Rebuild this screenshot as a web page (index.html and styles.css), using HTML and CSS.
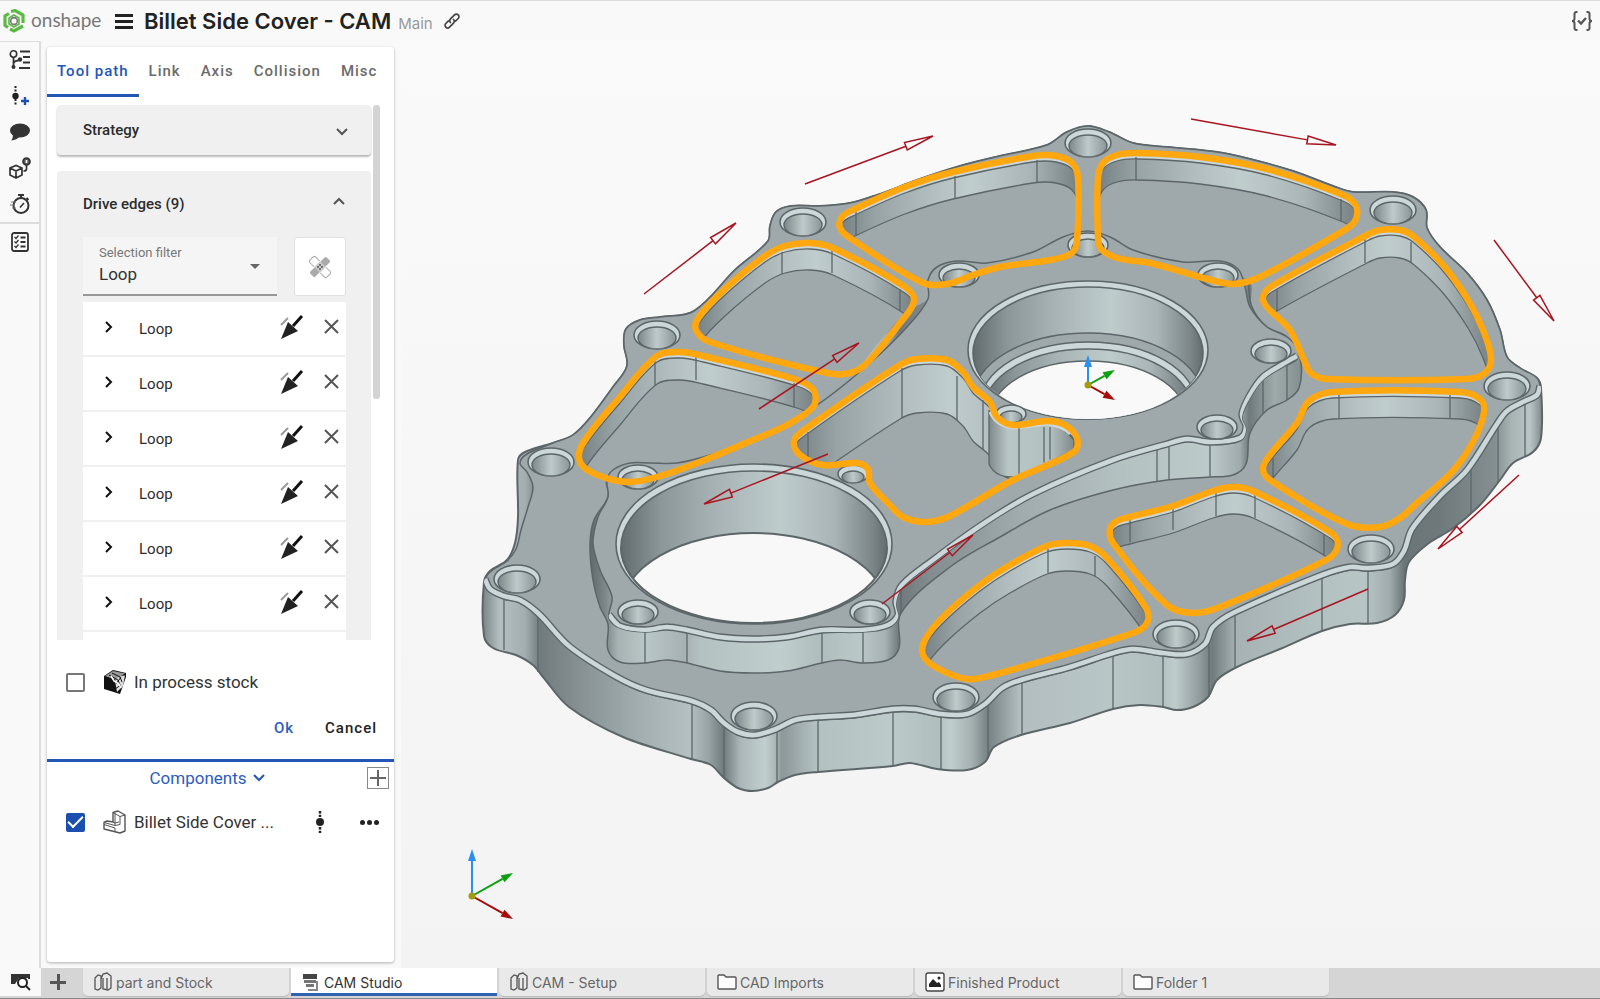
FILE: index.html
```html
<!DOCTYPE html>
<html lang="en">
<head>
  <meta charset="UTF-8">
  <meta name="viewport" content="width=device-width, initial-scale=1.0">
  <title>Billet Side Cover - CAM</title>
  <link rel="stylesheet" href="styles.css">
</head>
<body>

  <header class="topbar">
    <a class="logo" href="#">
      <svg width="22" height="24" viewBox="0 0 22 24" fill="none">
        <path d="M8 2.5L12 1.5L20 6V14" stroke="#5cb946" stroke-width="3.2"/>
        <path d="M20 17L11 22L7 20" stroke="#5cb946" stroke-width="3.2"/>
        <path d="M5 18.5L2 16.5V7L6 4.5" stroke="#5cb946" stroke-width="3.2"/>
        <path d="M11 6L16 9V15L11 18L6 15V9Z" stroke="#5cb946" stroke-width="1.6"/>
        <circle cx="11" cy="12" r="3.4" stroke="#777" stroke-width="1.6"/>
      </svg>
      <span>onshape</span>
    </a>
    <button class="menu" aria-label="Menu"><i></i><i></i><i></i></button>
    <h1>Billet Side Cover - CAM</h1>
    <span class="branch">Main</span>
    <button class="icon-btn" aria-label="Share link">
      <svg width="18" height="18" viewBox="0 0 18 18" fill="none" stroke="#444" stroke-width="1.7" stroke-linecap="round">
        <path d="M7.5 10.5a2.6 2.6 0 0 1 0-3.700l4-4a2.600 2.600 0 0 1 3.700 3.700l-2.700 2.700"/>
        <path d="M10.500 7.500a2.600 2.600 0 0 1 0 3.700l-4 4a2.600 2.600 0 0 1-3.700-3.700l2.700-2.700"/>
      </svg>
    </button>
    <button class="icon-btn last" aria-label="Feature script">
      <svg width="24" height="22" viewBox="0 0 24 22" fill="none" stroke="#555" stroke-width="2">
        <path d="M7.5 2H6.500Q4.500 2 4.500 4v4.500Q4.500 11 2 11q2.500 0 2.500 2.500V18q0 2 2 2h1"/>
        <path d="M16.500 2h1q2 0 2 2v4.500q0 2.500 2.500 2.500q-2.500 0-2.500 2.500V18q0 2-2 2h-1"/>
        <path d="M8 10.500l3 3L16 8" stroke-width="2.400"/>
      </svg>
    </button>
  </header>

  <main class="workspace">
    <nav class="rail">
      <button aria-label="Versions">
        <svg width="22" height="22" viewBox="0 0 22 22" fill="none" stroke="#333" stroke-width="2">
          <circle cx="4.5" cy="5" r="3.2" stroke-width="1.6"/>
          <path d="M4.5 8v9M4.5 15q0-3 5-3.5" stroke-width="1.8"/>
          <circle cx="4.5" cy="18" r="2" fill="#333" stroke="none"/>
          <circle cx="11" cy="10.5" r="2.2" fill="#333" stroke="none"/>
          <path d="M11 2.5h10M14 8h7M14 13.5h7M10 19h11"/>
        </svg>
      </button>
      <button aria-label="Add node">
        <svg width="22" height="22" viewBox="0 0 22 22">
          <circle cx="6.5" cy="11" r="3.2" fill="#222"/>
          <path d="M6.5 1v7M6.5 14v7" stroke="#222" stroke-width="2" stroke-dasharray="2 1.5"/>
          <path d="M16 12v8M12 16h8" stroke="#1f4fb0" stroke-width="2.4"/>
        </svg>
      </button>
      <button aria-label="Comments">
        <svg width="22" height="22" viewBox="0 0 22 22" fill="#333">
          <ellipse cx="11" cy="9.5" rx="10" ry="7"/>
          <path d="M4 13Q4 18 2 19.5Q8 19 11 15Z"/>
        </svg>
      </button>
      <button aria-label="Properties">
        <svg width="22" height="22" viewBox="0 0 22 22" fill="none" stroke="#333" stroke-width="1.7">
          <path d="M1 11l6-2.5 6 2.5v7l-6 3-6-3zM1 11l6 3 6-3M7 14v7"/>
          <circle cx="17.5" cy="4.5" r="3.5" fill="#555" stroke="#333"/>
          <path d="M17.5 8v4q0 2-3 2"/>
          <path d="M17.5 3v3" stroke="#fff"/>
        </svg>
      </button>
      <button aria-label="Timing">
        <svg width="22" height="22" viewBox="0 0 22 22" fill="none" stroke="#333" stroke-width="2">
          <circle cx="12" cy="12.5" r="7.500"/>
          <path d="M9 2h6M12 2v3M17.500 5l2 2"/>
          <path d="M11 14.500l4-4.500" stroke-width="1.600"/>
          <path d="M2 9h5M1 12h5M3 15h4" stroke-width="1.200" stroke="#777"/>
        </svg>
      </button>
      <button class="below-rule" aria-label="Checklist">
        <svg width="22" height="22" viewBox="0 0 22 22" fill="none" stroke="#333" stroke-width="1.8">
          <rect x="3" y="2" width="16" height="18" rx="2"/>
          <path d="M11.5 6.5h5M11.5 11h5M11.5 15.5h5"/>
          <path d="M5.500 6l1.500 1.500 2.500-3M5.500 10.500l1.500 1.500 2.500-3M5.500 15l1.500 1.500 2.500-3" stroke-width="1.300"/>
        </svg>
      </button>
    </nav>

    <section class="panel">
      <nav class="tabs">
        <a class="active" href="#">Tool path</a>
        <a href="#">Link</a>
        <a href="#">Axis</a>
        <a href="#">Collision</a>
        <a href="#">Misc</a>
      </nav>

      <div class="scroll">
        <button class="card strategy">
          Strategy
          <svg width="14" height="14" viewBox="0 0 14 14"><path d="M2 6l5 5 5-5"/></svg>
        </button>

        <div class="card edges">
          <button class="edges-head">
            Drive edges (9)
            <svg width="14" height="16" viewBox="0 0 14 16"><path d="M2 8l5-5 5 5"/></svg>
          </button>
          <div class="filter">
            <div class="field">
              <label for="filter">Selection filter</label>
              <select id="filter">
                <option>Loop</option>
                <option>Edge</option>
              </select>
            </div>
            <button class="patch" aria-label="Repair selection">
              <svg width="24" height="24" viewBox="0 0 24 24">
                <rect x="0" y="8" width="24" height="8" rx="2" fill="#fff" stroke="#aaa" transform="rotate(45 12 12)"/>
                <g transform="rotate(-45 12 12)">
                  <rect x="0" y="8" width="24" height="8" rx="2" fill="#aaa" stroke="#fff"/>
                  <rect x="8" y="8" width="8" height="8" fill="#ccc"/>
                </g>
                <path d="M10 12h0M12 10h0M14 12h0M12 14h0" stroke="#fff" stroke-width="1.5" stroke-linecap="round"/>
              </svg>
            </button>
          </div>
          <ul class="loops" id="loops"></ul>
        </div>
        <div class="thumb"></div>
      </div>

      <label class="stock">
        <input type="checkbox">
        <svg width="24" height="26" viewBox="0 0 24 26">
          <path d="M1 7L10 1L23 4V8L17 25L1 20Z" fill="#111"/>
          <path d="M2 7L10 2L22 4.500L12 11Z" fill="#999"/>
          <path d="M12 12Q14 7 22 6.500L20 17L14 23Z" fill="#ddd"/>
          <path d="M3 8l9 3M6 6l9 5l2 5M9 4l8 4l2 5M13 15l5-7M12 20l6-4" stroke="#111" fill="none"/>
          <path d="M8 7l3 5 5 3 2 4" stroke="#fff" fill="none" stroke-width="1.5"/>
        </svg>
        <span>In process stock</span>
      </label>
      <div class="actions">
        <button class="ok">Ok</button>
        <button>Cancel</button>
      </div>

      <div class="components">
        <div class="components-head">
          <button class="toggle">
            Components
            <svg width="14" height="10" viewBox="0 0 14 10"><path d="M2 2l5 5 5-5"/></svg>
          </button>
          <button class="add" aria-label="Add component"></button>
        </div>
        <div class="component">
          <label>
            <input type="checkbox" checked>
            <svg width="24" height="24" viewBox="0 0 24 24" fill="#fff" stroke="#555" stroke-width="1.4" stroke-linejoin="round">
              <path d="M10 2.500L15 1L22 5V21L17 23L1 19V12.500L4 11L10 12Z"/>
              <path d="M10 2.500L17 6.500L22 5M12 3.500V13M1 12.500L12 15.500L17 14.500V6.500M12 13V15.500M1 14.500L12 18V21M10 12L12 13L16 12" fill="none" stroke-width="1"/>
            </svg>
            <span>Billet Side Cover ...</span>
          </label>
          <button aria-label="Position">
            <svg width="12" height="24" viewBox="0 0 12 24">
              <circle cx="6" cy="12" r="4" fill="#222"/>
              <path d="M6 1v6M6 17v6" stroke="#222" stroke-width="2.5" stroke-dasharray="2.4 1.4"/>
            </svg>
          </button>
          <button class="more" aria-label="More"><i></i><i></i><i></i></button>
        </div>
      </div>
    </section>

    <section class="viewport">
      <svg id="model" viewBox="401 41 1199 927" role="img" aria-label="Billet side cover"></svg>
    </section>
  </main>

  <footer class="docs">
    <button class="find" aria-label="Search tabs">
      <svg width="22" height="20" viewBox="0 0 22 20" fill="none" stroke="#222" stroke-width="2">
        <path d="M2 12V3h17v4"/>
        <path d="M1 2h19v4H9l-4 6H1z" fill="#333" stroke="none"/>
        <circle cx="12.5" cy="10.5" r="4.5" fill="#fff"/>
        <path d="M16 14l4 4"/>
      </svg>
    </button>
    <button class="new" aria-label="New tab"></button>
    <a href="#">
      <svg width="20" height="20" viewBox="0 0 20 20" fill="none" stroke="#555" stroke-width="1.3"><path d="M2 6l3-3 3 1v12l-3 2-3-1zM8 7l2-5 4-1 4 3v12l-3 2-5-1V6"/><path d="M14 6v12"/></svg>
      part and Stock
    </a>
    <a class="current" href="#">
      <svg width="20" height="20" viewBox="0 0 20 20"><path d="M2 2h14v5H2z" fill="#444"/><path d="M3 8h12v3H3zM5 12h8v3H5z" fill="#777"/><path d="M7 18h9V9" stroke="#888" fill="none" stroke-width="2"/></svg>
      CAM Studio
    </a>
    <a href="#">
      <svg width="20" height="20" viewBox="0 0 20 20" fill="none" stroke="#555" stroke-width="1.3"><path d="M2 6l3-3 3 1v12l-3 2-3-1zM8 7l2-5 4-1 4 3v12l-3 2-5-1V6"/><path d="M14 6v12"/></svg>
      CAM - Setup
    </a>
    <a href="#">
      <svg width="20" height="20" viewBox="0 0 20 20" fill="#fff" stroke="#555" stroke-width="1.4"><path d="M1 16V4q0-1 1-1h5l2 2h9q1 0 1 1v10q0 1-1 1H2q-1 0-1-1z"/></svg>
      CAD Imports
    </a>
    <a href="#">
      <svg width="20" height="20" viewBox="0 0 20 20"><rect x="1" y="1" width="18" height="18" rx="2" fill="#fff" stroke="#444" stroke-width="1.4"/><path d="M4 15V12l4-5 4 4 2-1 2 3v2z" fill="#222"/><circle cx="14" cy="6" r="1.5" fill="#222"/></svg>
      Finished Product
    </a>
    <a href="#">
      <svg width="20" height="20" viewBox="0 0 20 20" fill="#fff" stroke="#555" stroke-width="1.4"><path d="M1 16V4q0-1 1-1h5l2 2h9q1 0 1 1v10q0 1-1 1H2q-1 0-1-1z"/></svg>
      Folder 1
    </a>
  </footer>

  <script src="model.js"></script>
</body>
</html>
```
FILE: styles.css
```css
* {
  box-sizing: border-box;
}

body {
  margin: 0;
  height: 100vh;
  display: flex;
  flex-direction: column;
  overflow: hidden;
  background: #f9f9f9;
  color: #333;
  font-family: Roboto, sans-serif;
}

button {
  background: none;
  border: none;
  padding: 0;
  font: inherit;
  color: inherit;
  letter-spacing: inherit;
  cursor: pointer;
}

a {
  color: inherit;
  text-decoration: none;
}

svg {
  display: block;
  flex: none;
}

/* top bar */
.topbar {
  flex: none;
  height: 41px;
  display: flex;
  align-items: center;
  padding: 0 6px 0 3px;
  border-top: 1px solid #ddd;
}

.logo {
  display: flex;
  align-items: center;
  gap: 6px;
  width: 112px;
  color: #777;
  font-family: Lato, sans-serif;
  font-size: 19px;
}

.logo span {
  margin-top: -3px;
}

.menu {
  width: 18px;
  margin-right: 11px;
}

.menu i {
  display: block;
  height: 3px;
  margin: 3px 0;
  background: #222;
}

h1 {
  margin: 0 7px 0 0;
  color: #222;
  font-family: Inter, sans-serif;
  font-size: 22px;
  font-weight: 600;
}

.branch {
  margin: 4px 10px 0 0;
  color: #999;
  font-family: Inter, sans-serif;
  font-size: 15px;
}

.icon-btn.last {
  margin-left: auto;
}

/* left side */
.workspace {
  flex: 1;
  min-height: 0;
  display: flex;
}

.rail {
  flex: none;
  width: 41px;
  border-top: 1px solid #ddd;
  border-right: 2px solid #ddd;
}

.rail button {
  display: flex;
  align-items: center;
  justify-content: center;
  width: 100%;
  height: 36px;
}

.rail button.below-rule {
  height: 38px;
  border-top: 2px solid #ddd;
}

.panel {
  flex: none;
  width: 347px;
  margin: 6px 7px 6px 6px;
  display: flex;
  flex-direction: column;
  background: #fff;
  border-radius: 3px;
  box-shadow: 0 1px 3px rgba(0,0,0,0.3);
}

.tabs {
  display: flex;
  height: 50px;
  color: #6b6b6b;
  font-size: 15px;
  font-weight: 500;
  line-height: 48px;
  letter-spacing: 1px;
}

.tabs a {
  padding: 0 10px;
}

.tabs .active {
  color: #2456b8;
  border-bottom: 3px solid #2456b8;
}

.scroll {
  position: relative;
  flex: 1;
  min-height: 0;
  overflow: hidden;
  margin-top: 8px;
  padding: 0 23px 0 10px;
}

.thumb {
  position: absolute;
  top: 0;
  right: 14px;
  width: 7px;
  height: 294px;
  border-radius: 3px;
  background: #d4d4d4;
}

.card {
  background: #f0f0f0;
  border-radius: 4px;
  color: #2c2c2c;
  font-size: 15px;
  font-weight: 500;
}

.card svg path {
  fill: none;
  stroke: #555;
  stroke-width: 2;
}

.strategy,
.edges-head {
  display: flex;
  align-items: center;
  justify-content: space-between;
  width: 100%;
}

.strategy {
  height: 50px;
  padding: 0 22px 0 26px;
  box-shadow: 0 2px 2px #bbb;
}

.edges {
  margin-top: 16px;
  padding: 0 25px 0 26px;
}

.edges-head {
  height: 66px;
}

.filter {
  display: flex;
  justify-content: space-between;
  height: 59px;
}

.field {
  position: relative;
  width: 194px;
  padding: 8px 16px 0;
  background: #f5f5f5;
  border-bottom: 2px solid #999;
  font-weight: 400;
}

.field label {
  display: block;
  color: #777;
  font-size: 13px;
  line-height: 16px;
}

.field select {
  width: 100%;
  padding: 0;
  appearance: none;
  background: none;
  border: none;
  color: #333;
  font-family: Roboto, sans-serif;
  font-size: 17px;
  line-height: 26px;
}

.field::after {
  content: "";
  position: absolute;
  right: 17px;
  top: 27px;
  border: 5px solid transparent;
  border-top-color: #666;
  border-bottom: none;
}

.patch {
  display: flex;
  align-items: center;
  justify-content: center;
  width: 52px;
  background: #fff;
  border: 1px solid #e2e2e2;
  border-radius: 3px;
}

.loops {
  list-style: none;
  margin: 6px 0 0;
  padding: 0 0 20px;
  background: #fff;
}

.loops li {
  display: flex;
  align-items: center;
  height: 55px;
  padding: 0 7px 4px 20px;
  border-bottom: 2px solid #f0f0f0;
  font-size: 15px;
  font-weight: 400;
}

.loops span {
  flex: 1;
  margin: 4px 0 0 24px;
}

.loops button + button {
  margin-left: 20px;
}

.loops svg .chevron {
  stroke: #111;
}

.loops svg .head {
  fill: #222;
  stroke: none;
}

.loops svg .shaft {
  stroke: #111;
  stroke-width: 3;
}

.loops svg .ghost {
  stroke: #999;
}

/* panel footer */
.stock,
.component label {
  display: flex;
  align-items: center;
  color: #333;
  font-size: 17px;
}

.stock {
  margin-top: 21px;
  height: 42px;
  padding-left: 19px;
}

.stock svg,
.component label svg {
  margin: 0 7px 0 18px;
}

input[type="checkbox"] {
  appearance: none;
  width: 19px;
  height: 19px;
  margin: 0;
  border: 2px solid #777;
  border-radius: 2px;
}

input[type="checkbox"]:checked {
  display: grid;
  place-items: center;
  background: #1b4fae;
  border-color: #1b4fae;
}

input[type="checkbox"]:checked::after {
  content: "";
  width: 13px;
  height: 6px;
  margin-top: -4px;
  border: solid #fff;
  border-width: 0 0 2px 2px;
  transform: rotate(-45deg);
}

.actions {
  display: flex;
  justify-content: flex-end;
  align-items: center;
  gap: 31px;
  height: 50px;
  margin-bottom: 6px;
  padding-right: 17px;
  color: #222;
  font-size: 15px;
  font-weight: 500;
  letter-spacing: 1px;
}

.actions .ok {
  color: #2b5cc0;
}

.components {
  height: 203px;
  border-top: 3px solid #2456b8;
}

.components-head {
  position: relative;
  display: flex;
  justify-content: center;
  align-items: center;
  height: 32px;
  padding-right: 26px;
}

.toggle {
  display: flex;
  align-items: center;
  gap: 5px;
  color: #2b5cc0;
  font-size: 17px;
}

.toggle path {
  fill: none;
  stroke: #2456b8;
  stroke-width: 2;
}

.add {
  position: absolute;
  right: 5px;
  width: 22px;
  height: 22px;
  border: 1px solid #888;
  background:
    linear-gradient(#666, #666) center / 16px 2px no-repeat,
    linear-gradient(#666, #666) center / 2px 16px no-repeat;
}

.component {
  display: flex;
  align-items: center;
  height: 56px;
  padding: 0 15px 0 19px;
}

.component label {
  flex: 1;
}

.more {
  display: flex;
  gap: 2px;
  margin-left: 34px;
}

.more i {
  width: 5px;
  height: 5px;
  border-radius: 50%;
  background: #222;
}

.viewport {
  flex: 1;
  min-width: 0;
  background: linear-gradient(#fafafa, #f3f3f3);
}

.viewport > svg {
  width: 100%;
  height: 100%;
}

/* document tabs */
.docs {
  flex: none;
  display: flex;
  height: 31px;
  padding-bottom: 2px;
  background: #d5d5d5;
  border-bottom: 1px solid #888;
  color: #666;
  font-family: Inter, sans-serif;
  font-size: 14px;
}

.find {
  width: 41px;
  display: flex;
  align-items: center;
  justify-content: center;
  background: #f9f9f9;
}

.new {
  width: 34px;
  margin-right: 8px;
  background:
    linear-gradient(#555, #555) center / 16px 3px no-repeat,
    linear-gradient(#555, #555) center / 3px 16px no-repeat;
}

.docs a {
  display: flex;
  align-items: center;
  gap: 3px;
  width: 206px;
  margin-right: 2px;
  padding-left: 10px;
  background: #e9e9e9;
  border-radius: 0 0 5px 5px;
  box-shadow: 0 1px 1px #bbb;
}

.docs .current {
  background: #fff;
  color: #333;
  border-radius: 0;
  box-shadow: inset 0 -3px #2f62b0;
}
```
FILE: model.js
```js
// list of selected loops
const row = `
  <li>
    <button aria-label="Expand"><svg width="12" height="14" viewBox="0 0 12 14"><path class="chevron" d="M3 2l5 5-5 5"/></svg></button>
    <span>Loop</span>
    <button aria-label="Flip direction"><svg width="24" height="24" viewBox="0 0 24 24">
      <path class="ghost" d="M1 10l7-7"/>
      <path class="shaft" d="M22 1L13 11"/>
      <path class="head" d="M1 24L8 7L18 16Z"/>
    </svg></button>
    <button aria-label="Remove"><svg width="15" height="15" viewBox="0 0 15 15"><path d="M1 1l13 13M14 1L1 14"/></svg></button>
  </li>`;
document.getElementById('loops').innerHTML = row.repeat(6);

// smooth curve through a list of points
function curve(p, closed) {
  const n = p.length;
  const at = i => closed ? p[(i + n) % n] : p[Math.max(0, Math.min(n - 1, i))];
  let d = 'M' + p[0];
  for (let i = 0; i < (closed ? n : n - 1); i++) {
    const a = at(i - 1), b = at(i), c = at(i + 1), e = at(i + 2);
    const t1 = Math.hypot(c[0] - a[0], c[1] - a[1]) || 1;
    const t2 = Math.hypot(e[0] - b[0], e[1] - b[1]) || 1;
    const k = Math.hypot(c[0] - b[0], c[1] - b[1]) / 3;
    d += ` C${(b[0] + (c[0] - a[0]) / t1 * k).toFixed(1)} ${(b[1] + (c[1] - a[1]) / t1 * k).toFixed(1)}`
       + ` ${(c[0] - (e[0] - b[0]) / t2 * k).toFixed(1)} ${(c[1] - (e[1] - b[1]) / t2 * k).toFixed(1)}`
       + ` ${c[0]} ${c[1]}`;
  }
  return d + (closed ? 'Z' : '');
}

function pts(s) {
  return s.trim().split(/\s+/).map(q => q.split(',').map(Number));
}

const EDGE = '#5c6669';
const FACE = '#9fa8aa';
const LIP = '#cbd7d8';

// rear part of the outline, shared by the silhouette and the top face
const rear = `573,435 590,418 613,387 627,366 624,345 626,329 640,320 660,317 694,311 735,270 768,241
  770,226 776,212 791,206 820,206 850,203 877,195 917,180 960,166 1000,156 1047,145 1067,132 1088,126
  1109,132 1133,143 1167,147 1217,152 1250,159 1293,171 1333,186 1353,192 1393,192 1413,197 1426,210
  1427,228 1440,247 1467,273 1487,300 1500,330 1507,357 1520,368 1537,378`;

const body = `484,582 490,571 507,560 515,543 518,517 518,460 525,452 553,443 ${rear}
  1541,388 1541,438 1533,452 1513,463 1500,480 1480,505 1452,529 1429,543 1409,562 1405,580 1404,600
  1395,615 1377,623 1350,624 1322,631 1280,649 1237,667 1217,680 1208,697 1193,707 1177,710 1163,707
  1140,705 1113,709 1070,723 1021,735 994,747 985,762 967,770 937,769 910,763 893,766 818,772 795,775
  778,782 768,788 753,791 738,788 723,777 711,765 691,759 623,737 569,707 543,677 533,665 516,655
  493,648 484,636`;

const front = `485,582 490,592 504,599 520,603 539,617 569,649 615,679 646,693 692,704 711,713 724,726
  738,735 755,738 776,732 795,723 818,720 853,718 893,712 914,712 941,717 967,717 985,707 1002,691
  1021,683 1070,670 1113,656 1133,652 1163,656 1187,657 1205,647 1213,630 1235,615 1322,578 1350,570
  1368,571 1393,567 1404,554 1412,532 1440,499 1467,473 1497,427 1507,414 1525,404 1537,398 1540,389`;

const topFace = front + ' ' + pts(rear).reverse().join(' ') +
  ' 553,443 527,454 520,463 527,472 533,487 528,507 521,530 516,549 507,561 490,572';

const plateauTop = `607,480 613,470 630,463 650,463 677,463 710,455 753,440 817,405 870,363 907,327 928,299
  928,280 937,267 957,261 987,263 1033,252 1063,237 1088,231 1110,237 1133,250 1183,262 1220,261
  1238,269 1245,287 1250,307 1267,327 1287,337 1297,348 1297,359 1283,367 1263,380 1250,398 1242,417
  1246,430 1240,441 1210,445 1187,442 1167,447 1113,463 1033,497 983,527 933,563 902,588 896,604
  898,618 888,628 863,632 822,633 787,640 753,642 720,640 687,633 667,630 645,632 620,628 609,618
  612,597 600,570 593,543 598,517 608,497`;

const plateauWall = `607,480 608,497 594,520 590,545 593,580 600,607 608,624 608,650 620,662 645,663 667,660
  687,663 720,671 753,673 787,671 822,663 840,660 863,663 888,660 899,648 901,613 950,567 1000,537
  1050,510 1113,490 1167,480 1210,477 1233,475 1246,464 1250,433 1267,410 1287,400 1299,388 1300,358
  1287,337 1267,327 1252,307 1248,280 1183,262 1088,300 928,300 800,430`;

const plateauFront = `609,618 620,629 645,633 667,630 687,633 720,640 753,642 787,640 822,633 863,633 888,628
  898,618 896,604 902,588 933,563 983,527 1033,497 1113,463 1167,447 1187,442 1210,445 1240,441
  1246,430 1242,417 1250,398 1263,380 1283,367 1297,359`;

// pockets: outline, depth, corner lines (x, y)
const pockets = [
  { p: '855,209 905,187 953,172 1033,156 1056,156 1072,163 1078,178 1077,240 1072,253 1050,260 1000,267 973,275 947,284 923,283 850,238 840,228 842,217', d: 23,
    l: [[856, 212], [955, 176], [1037, 160]] },
  { p: '1137,153 1200,157 1267,169 1343,195 1356,206 1355,221 1343,231 1260,277 1233,284 1207,279 1193,275 1150,263 1117,258 1101,249 1098,238 1098,178 1103,163 1117,155', d: 23,
    l: [[1136, 157], [1341, 199]] },
  { p: '1367,235 1380,230 1400,230 1413,236 1443,265 1468,300 1483,330 1491,358 1485,373 1467,379 1327,379 1311,373 1304,360 1290,330 1267,307 1263,297 1272,286', d: 24,
    l: [[1277, 290], [1365, 239], [1411, 242]] },
  { p: '1333,392 1460,392 1480,399 1484,412 1474,440 1452,472 1417,503 1400,518 1380,527 1347,524 1270,480 1263,469 1270,455 1297,423 1309,401', d: 23,
    l: [[1273, 458], [1339, 395], [1450, 395]] },
  { p: '1130,517 1173,506 1213,491 1233,487 1253,491 1330,532 1338,545 1328,559 1220,607 1193,613 1167,605 1113,543 1110,529 1117,521', d: 23,
    l: [[1130, 519], [1173, 507], [1216, 493], [1255, 495], [1324, 534]] },
  { p: '1047,546 1067,543 1090,546 1107,558 1146,608 1147,623 1133,633 993,675 967,679 937,668 923,655 925,640 943,617 980,585 1010,565', d: 24,
    l: [[1048, 549], [1095, 556]] },
  { p: '657,356 680,352 703,356 797,380 814,391 813,407 785,426 753,440 700,462 657,477 630,482 603,477 581,464 582,445 620,397', d: 24,
    l: [[655, 361], [696, 356], [794, 383]] },
  { p: '765,256 785,246 810,243 833,248 905,287 914,301 900,323 867,363 850,373 827,373 710,342 696,330 699,317 725,289', d: 23,
    l: [[782, 252], [832, 250], [900, 289]] }
];

const centre = { p: '900,365 917,359 947,360 963,372 973,387 990,402 997,417 1013,425 1047,421 1065,425 1077,438 1074,452 1013,480 950,516 927,522 903,517 888,503 870,483 868,469 857,463 823,465 800,455 794,441 807,428', d: 50,
  l: [[902, 368], [957, 376], [983, 400], [808, 432]] };

const bigHoles = pts('1088,143 803,222 657,335 551,462 517,579 754,716 956,697 1176,634 1371,549 1507,386 1393,210');
const midHoles = pts('638,477 638,612 870,612 959,275 1088,245 1218,275 1271,351 1217,427');
const pinHoles = pts('853,474 1011,414');

const arrows = [
  [805, 184, 933, 136], [1191, 119, 1336, 145], [1494, 240, 1554, 321], [1519, 475, 1438, 549],
  [1368, 589, 1247, 641], [882, 604, 973, 535], [828, 454, 704, 504], [759, 409, 859, 343], [644, 294, 736, 223]
];

function line(x1, y1, x2, y2) {
  return `<path d="M${x1} ${y1}L${x2} ${y2}" stroke="${EDGE}" stroke-width="1.3"/>`;
}

function pocket(o, i) {
  const d = curve(pts(o.p), true);
  return `<clipPath id="clip${i}"><path d="${d}"/></clipPath>
    <g clip-path="url(#clip${i})">
      <path d="${d}" fill="${LIP}"/>
      <path d="${d}" transform="translate(0 6)" fill="url(#pocketWall)" stroke="${EDGE}" stroke-width="1.3"/>
      ${o.l.map(q => line(q[0], q[1], q[0], q[1] + o.d)).join('')}
      <path d="${d}" transform="translate(0 ${o.d + 4})" fill="${FACE}" stroke="${EDGE}" stroke-width="1.3"/>
    </g>`;
}

function hole(x, y, rx, ry) {
  const id = 'h' + x + y;
  return `<ellipse cx="${x}" cy="${y}" rx="${rx}" ry="${ry}" fill="${LIP}" stroke="${EDGE}" stroke-width="1.6"/>
    <clipPath id="${id}"><ellipse cx="${x}" cy="${y}" rx="${rx}" ry="${ry}"/></clipPath>
    <ellipse cx="${x}" cy="${y + 3}" rx="${rx - 4}" ry="${ry - 3}" fill="url(#holeWall)" stroke="${EDGE}" stroke-width="1.4" clip-path="url(#${id})"/>`;
}

function arrow([x1, y1, x2, y2]) {
  const len = Math.hypot(x2 - x1, y2 - y1);
  const ux = (x2 - x1) / len, uy = (y2 - y1) / len;
  const bx = x2 - ux * 29, by = y2 - uy * 29;
  return `<path d="M${x1} ${y1}L${bx} ${by}M${x2} ${y2}L${bx - uy * 4} ${by + ux * 4}L${bx + uy * 4} ${by - ux * 4}Z"/>`;
}

function axis(x1, y1, x2, y2, colour) {
  const len = Math.hypot(x2 - x1, y2 - y1);
  const ux = (x2 - x1) / len, uy = (y2 - y1) / len;
  const bx = x2 - ux * 12, by = y2 - uy * 12;
  return `<path d="M${x1} ${y1}L${bx} ${by}" stroke="${colour}" stroke-width="2"/>
    <path d="M${x2} ${y2}L${bx - uy * 4} ${by + ux * 4}L${bx + uy * 4} ${by - ux * 4}Z" fill="${colour}"/>`;
}

function triad(x, y, up, dx, dy) {
  return axis(x, y, x, y - up, '#2a8ff0') + axis(x, y, x + dx, y - dy, '#0ca010') +
    axis(x, y, x + dx, y + dy, '#a80808') + `<circle cx="${x}" cy="${y}" r="3.5" fill="#a39a10"/>`;
}

function gradient(id, x1, x2, stops) {
  const span = x2 - x1;
  const units = span > 1 ? `gradientUnits="userSpaceOnUse" x1="${x1}" x2="${x2}" y1="0" y2="0"` : '';
  return `<linearGradient id="${id}" ${units}>` +
    stops.map(s => `<stop offset="${(s[0] - x1) / span}" stop-color="${s[1]}"/>`).join('') + '</linearGradient>';
}

const bodyCurve = curve(pts(body), true);
const plateauTopCurve = curve(pts(plateauTop), true);

// light chamfer along the inner side of an edge
function lip(d, clip) {
  return `<g clip-path="url(#${clip})"><g transform="translate(0 -3)" fill="none" stroke-linejoin="round">
    <path d="${d}" stroke="${EDGE}" stroke-width="7.4"/>
    <path d="${d}" stroke="${LIP}" stroke-width="4.6"/></g></g>`;
}

document.getElementById('model').innerHTML = `
  <defs>
    ${gradient('wall', 484, 1542, [[484, '#7f898b'], [500, '#b4c0c1'], [525, '#a3aeb0'], [540, '#717b7d'], [580, '#879193'],
      [640, '#a3aeb0'], [690, '#b4c1c1'], [708, '#99a4a5'], [724, '#717b7d'], [740, '#aab6b7'], [765, '#c2cfcf'], [776, '#a9b5b5'],
      [782, '#8c9798'], [815, '#b3c0c0'], [890, '#bccaca'], [938, '#b1bebe'], [950, '#c1cece'], [972, '#a5b0b1'], [988, '#778183'],
      [1020, '#b2bebf'], [1110, '#b9c6c6'], [1160, '#b2bfbf'], [1175, '#bfcccc'], [1200, '#909b9c'], [1212, '#717b7d'],
      [1236, '#a6b2b3'], [1322, '#b4c1c1'], [1365, '#b8c5c5'], [1390, '#a0abac'], [1404, '#6b7577'], [1440, '#6f797b'],
      [1495, '#858f91'], [1512, '#a9b5b5'], [1530, '#b9c6c6'], [1542, '#7f898b']])}
    ${gradient('plateauWall', 590, 1302, [[590, '#5f696b'], [606, '#7f898b'], [618, '#a7b3b3'], [645, '#bac7c7'], [685, '#a6b1b2'],
      [700, '#b4c1c1'], [780, '#c1cece'], [820, '#b0bdbd'], [860, '#bbc8c8'], [885, '#a6b2b3'], [899, '#6f797b'], [930, '#838d8f'],
      [1020, '#a0abad'], [1120, '#b4c1c1'], [1210, '#bdcaca'], [1240, '#a0abac'], [1249, '#6f797b'], [1275, '#9fabab'],
      [1302, '#828d8e']])}
    ${gradient('pocketWall', 0, 1, [[0, '#768082'], [0.15, '#98a3a5'], [0.4, '#b3bfc0'], [0.55, '#c0cdcd'], [0.8, '#aab5b7'], [1, '#768082']])}
    ${gradient('holeWall', 0, 1, [[0, '#7d8789'], [0.5, '#bfcbcb'], [1, '#8a9597']])}
    ${gradient('bore', 0, 1, [[0, '#626c6e'], [0.15, '#8c9799'], [0.35, '#a6b2b3'], [0.6, '#bfcccc'], [0.8, '#a9b5b6'], [0.95, '#7a8486'], [1, '#626c6e']])}
    ${gradient('lobe', 990, 1078, [[990, '#828d8e'], [1008, '#b9c6c6'], [1050, '#b4c1c1'], [1078, '#768082']])}
    <clipPath id="bodyClip"><path d="${bodyCurve}"/></clipPath>
    <clipPath id="plateauClip"><path d="${plateauTopCurve}"/></clipPath>
    <clipPath id="boreA"><ellipse cx="754" cy="547" rx="133" ry="76"/></clipPath>
    <clipPath id="boreB"><ellipse cx="1088" cy="353" rx="115" ry="66"/></clipPath>
  </defs>

  <path d="${bodyCurve}" fill="url(#wall)" stroke="${EDGE}" stroke-width="2"/>
  ${[[504, 597, 650], [538, 617, 672], [692, 704, 760], [724, 726, 778], [777, 732, 783], [818, 720, 772], [893, 712, 766],
     [941, 717, 769], [988, 706, 757], [1022, 683, 735], [1113, 656, 709], [1163, 656, 707], [1209, 640, 697], [1235, 615, 667],
     [1322, 578, 631], [1368, 571, 623], [1471, 470, 514], [1498, 427, 482], [1525, 404, 456]].map(q => line(q[0], q[1], q[0], q[2])).join('')}
  <path d="${curve(pts(topFace), true)}" fill="${FACE}" stroke="${EDGE}" stroke-width="1.5"/>
  ${lip(curve(pts(front)), 'bodyClip')}
  ${pockets.map(pocket).join('')}

  <path d="${curve(pts(plateauWall), true)}" fill="url(#plateauWall)"/>
  <path d="${curve(pts(plateauWall).slice(0, 38))}" fill="none" stroke="${EDGE}" stroke-width="1.5"/>
  ${[[645, 632, 663], [687, 633, 663], [822, 633, 663], [863, 632, 663], [901, 590, 613], [1157, 449, 482], [1169, 446, 480],
     [1210, 445, 477], [1263, 381, 414], [1287, 366, 400]].map(q => line(q[0], q[1], q[0], q[2])).join('')}
  <path d="${plateauTopCurve}" fill="${FACE}" stroke="${EDGE}" stroke-width="1.5"/>
  ${lip(curve(pts(plateauFront)), 'plateauClip')}

  ${pocket(centre, 'C')}
  <path d="M989 410Q991 424 1013 428L1047 424Q1062 425 1074 440V450L1020 476Q996 480 989 464Z" fill="url(#lobe)" stroke="${EDGE}" stroke-width="1.3"/>
  <path d="M990 412Q996 427 1015 428L1047 424Q1062 426 1070 434" fill="none" stroke="${LIP}" stroke-width="3"/>
  ${[1019, 1044, 1050].map(x => line(x, 427, x, 475 - (x - 1019) / 2)).join('')}

  <ellipse cx="754" cy="544" rx="138" ry="80" fill="${LIP}" stroke="${EDGE}" stroke-width="1.6"/>
  <ellipse cx="754" cy="547" rx="133" ry="76" fill="url(#bore)" stroke="${EDGE}" stroke-width="1.6"/>
  <g clip-path="url(#boreA)">
    <ellipse cx="754" cy="610" rx="133" ry="77" fill="#f8f8f8" stroke="${EDGE}" stroke-width="2"/>
  </g>
  <path d="M621 547A133 76 0 0 0 887 547" fill="none" stroke="${EDGE}" stroke-width="2"/>

  <ellipse cx="1088" cy="350" rx="120" ry="69" fill="${LIP}" stroke="${EDGE}" stroke-width="1.6"/>
  <ellipse cx="1088" cy="353" rx="115" ry="66" fill="url(#bore)" stroke="${EDGE}" stroke-width="1.6"/>
  <g clip-path="url(#boreB)" stroke="${EDGE}" stroke-width="1.5">
    <ellipse cx="1088" cy="399" rx="115" ry="66" fill="${FACE}"/>
    <ellipse cx="1088" cy="404" rx="108" ry="62" fill="${LIP}"/>
    <ellipse cx="1088" cy="409" rx="104" ry="60" fill="url(#bore)"/>
    <ellipse cx="1088" cy="417" rx="98" ry="56" fill="#f9f9f9"/>
  </g>

  ${bigHoles.map(q => hole(q[0], q[1], 23, 14)).join('')}
  ${midHoles.map(q => hole(q[0], q[1], 20, 12)).join('')}
  ${pinHoles.map(q => hole(q[0], q[1], 15, 9)).join('')}

  <g fill="none" stroke="#ffa70f" stroke-width="6.5" stroke-linejoin="round">
    ${pockets.concat(centre).map(o => `<path d="${curve(pts(o.p), true)}"/>`).join('')}
  </g>
  <g fill="none" stroke="#a81520" stroke-width="1.5">${arrows.map(arrow).join('')}</g>
  ${triad(1088, 385, 30, 27, 15)}
  ${triad(472, 896, 47, 41, 23)}
`;
```
